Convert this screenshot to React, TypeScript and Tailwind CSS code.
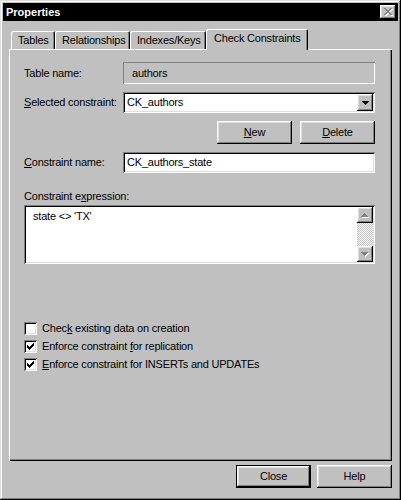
import React from "react";

const RAISED =
  "shadow-[inset_-1px_-1px_0_#000,inset_1px_1px_0_#fff,inset_-2px_-2px_0_#808080,inset_2px_2px_0_#dfdfdf]";
const SUNKEN =
  "shadow-[inset_1px_1px_0_#808080,inset_-1px_-1px_0_#fff,inset_2px_2px_0_#000,inset_-2px_-2px_0_#dfdfdf]";
const DEFAULT_BTN =
  "shadow-[inset_0_0_0_1px_#000,inset_-2px_-2px_0_#000,inset_2px_2px_0_#fff,inset_-3px_-3px_0_#808080,inset_3px_3px_0_#dfdfdf]";
const TAB =
  "shadow-[inset_1px_1px_0_#fff,inset_-1px_0_0_#000,inset_-2px_0_0_#808080]";
const PANEL =
  "shadow-[inset_1px_1px_0_#fff,inset_-1px_-1px_0_#000,inset_-2px_-2px_0_#808080]";

function U({ children }: { children: React.ReactNode }) {
  return <span className="underline decoration-1 underline-offset-[1px]">{children}</span>;
}

const XPATH =
  "M0 0h2v1H0z M6 0h2v1H6z M1 1h2v1H1z M5 1h2v1H5z M2 2h4v1H2z M3 3h2v1H3z M2 4h4v1H2z M1 5h2v1H1z M5 5h2v1H5z M0 6h2v1H0z M6 6h2v1H6z";
const UP = "M3 0h1v1H3z M2 1h3v1H2z M1 2h5v1H1z M0 3h7v1H0z";
const DOWN = "M0 0h7v1H0z M1 1h5v1H1z M2 2h3v1H2z M3 3h1v1H3z";
const CHECK =
  "M3 5h1v3H3z M4 6h1v3H4z M5 7h1v3H5z M6 6h1v3H6z M7 5h1v3H7z M8 4h1v3H8z M9 3h1v3H9z";

function Checkbox({ checked }: { checked: boolean }) {
  return (
    <div className={`w-[13px] h-[13px] bg-white shrink-0 ${SUNKEN}`}>
      {checked && (
        <svg width="13" height="13" viewBox="0 0 13 13" shapeRendering="crispEdges">
          <path d={CHECK} fill="#000" />
        </svg>
      )}
    </div>
  );
}

function Btn({ children, className = "" }: { children: React.ReactNode; className?: string }) {
  return (
    <div
      className={`w-[75px] h-[23px] bg-[#c0c0c0] flex items-center justify-center ${className}`}
    >
      {children}
    </div>
  );
}

function DisabledArrow({ d, w = 7, h = 4 }: { d: string; w?: number; h?: number }) {
  return (
    <svg width={w + 1} height={h + 1} viewBox={`0 0 ${w + 1} ${h + 1}`} shapeRendering="crispEdges">
      <path d={d} fill="#fff" transform="translate(1,1)" />
      <path d={d} fill="#808080" />
    </svg>
  );
}

export default function App() {
  return (
    <div
      className={`w-[401px] h-[500px] bg-[#c0c0c0] p-[3px] text-black text-[11px] leading-[13px] tracking-[-0.2px] font-['Liberation_Sans',Arial,sans-serif] flex flex-col shadow-[inset_-1px_-1px_0_#000,inset_1px_1px_0_#dfdfdf,inset_-2px_-2px_0_#808080,inset_2px_2px_0_#fff]`}
    >
      {/* Title bar */}
      <div className="h-[18px] bg-black flex items-center justify-between pl-[3px] pr-[2px] shrink-0">
        <span className="text-white font-bold tracking-normal">Properties</span>
        <div className={`w-[16px] h-[14px] bg-[#c0c0c0] flex items-center justify-center ${RAISED}`}>
          <svg width="9" height="8" viewBox="0 0 9 8" shapeRendering="crispEdges">
            <path d={XPATH} fill="#fff" transform="translate(1,1)" />
            <path d={XPATH} fill="#808080" />
          </svg>
        </div>
      </div>

      {/* Tabs */}
      <div className="ml-[6px] mt-[8px] w-[383px] shrink-0">
        <div className="flex items-end h-[20px] pl-[2px]">
          <div className={`h-[18px] w-[44px] pt-[3px] pl-[7px] rounded-t-[2px] ${TAB}`}>Tables</div>
          <div className={`h-[18px] w-[75px] pt-[3px] pl-[7px] rounded-t-[2px] ${TAB}`}>Relationships</div>
          <div className={`h-[18px] w-[76px] pt-[3px] pl-[7px] rounded-t-[2px] ${TAB}`}>Indexes/Keys</div>
          <div
            className={`relative z-10 -mb-[1px] h-[21px] w-[102px] pt-[3px] pl-[8px] bg-[#c0c0c0] rounded-t-[2px] ${TAB}`}
          >
            Check Constraints
          </div>
        </div>

        {/* Panel */}
        <div className={`h-[412px] pl-[15px] pt-[13px] flex flex-col ${PANEL}`}>
          <div className="flex items-center h-[22px]">
            <span className="w-[99px]">Table name:</span>
            <div className="w-[252px] h-full flex items-center pl-[9px] shadow-[inset_1px_1px_0_#808080,inset_-1px_-1px_0_#fff]">
              authors
            </div>
          </div>

          <div className="flex items-center h-[21px] mt-[8px]">
            <span className="w-[99px]">
              <U>S</U>elected constraint:
            </span>
            <div className={`w-[252px] h-full bg-white flex items-center justify-between p-[2px] ${SUNKEN}`}>
              <span className="pl-[2px]">CK_authors</span>
              <div className={`w-[16px] h-[17px] bg-[#c0c0c0] flex items-center justify-center ${RAISED}`}>
                <svg width="7" height="4" viewBox="0 0 7 4" shapeRendering="crispEdges">
                  <path d={DOWN} fill="#000" />
                </svg>
              </div>
            </div>
          </div>

          <div className="flex justify-end gap-[8px] mt-[8px] w-[351px]">
            <Btn className={RAISED}>
              <span>
                <U>N</U>ew
              </span>
            </Btn>
            <Btn className={RAISED}>
              <span>
                <U>D</U>elete
              </span>
            </Btn>
          </div>

          <div className="flex items-center h-[21px] mt-[8px]">
            <span className="w-[99px]">
              <U>C</U>onstraint name:
            </span>
            <div className={`w-[252px] h-full bg-white flex items-center pl-[4px] ${SUNKEN}`}>
              CK_authors_state
            </div>
          </div>

          <div className="mt-[17px] h-[13px]">
            Constraint e<U>x</U>pression:
          </div>

          <div className={`mt-[2px] w-[351px] h-[59px] bg-white flex p-[2px] ${SUNKEN}`}>
            <div className="flex-1 pl-[7px] pt-[3px]">state &lt;&gt; 'TX'</div>
            <div className="w-[16px] h-full flex flex-col">
              <div className={`h-[16px] bg-[#c0c0c0] flex items-center justify-center ${RAISED}`}>
                <DisabledArrow d={UP} />
              </div>
              <div className="flex-1 bg-[repeating-conic-gradient(#ffffff_0%_25%,#c0c0c0_0%_50%)] bg-[length:2px_2px]" />
              <div className={`h-[16px] bg-[#c0c0c0] flex items-center justify-center ${RAISED}`}>
                <DisabledArrow d={DOWN} />
              </div>
            </div>
          </div>

          <div className="mt-[55px] flex flex-col">
            <div className="flex items-center gap-[5px] h-[18px]">
              <Checkbox checked={false} />
              <span>
                Chec<U>k</U> existing data on creation
              </span>
            </div>
            <div className="flex items-center gap-[5px] h-[18px]">
              <Checkbox checked={true} />
              <span>
                Enforce constraint <U>f</U>or replication
              </span>
            </div>
            <div className="flex items-center gap-[5px] h-[18px]">
              <Checkbox checked={true} />
              <span>
                <U>E</U>nforce constraint for INSERTs and UPDATEs
              </span>
            </div>
          </div>
        </div>
      </div>

      {/* Bottom buttons */}
      <div className="ml-[6px] mt-[4px] w-[383px] flex justify-end gap-[6px]">
        <Btn className={DEFAULT_BTN}>Close</Btn>
        <Btn className={RAISED}>Help</Btn>
      </div>
    </div>
  );
}
